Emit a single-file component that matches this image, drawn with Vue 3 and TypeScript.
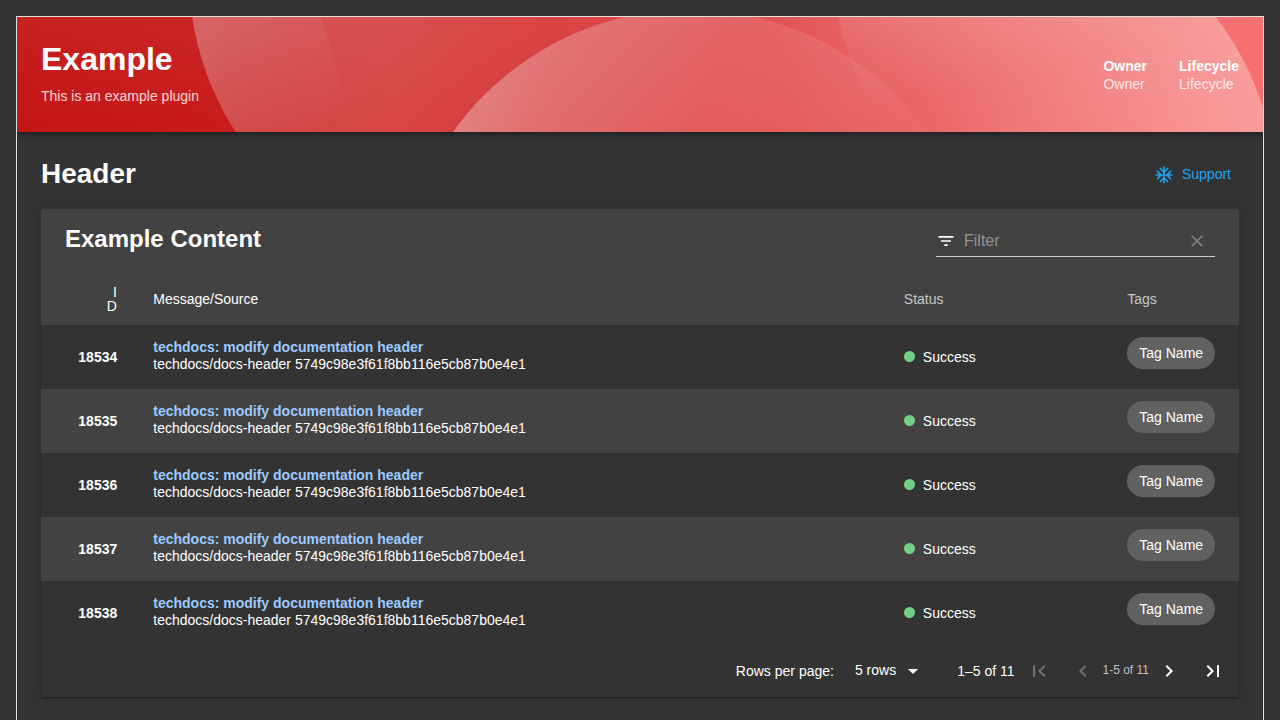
<script setup lang="ts">
interface Build {
  id: number
  message: string
  source: string
  status: string
  tag: string
}

const builds: Build[] = [18534, 18535, 18536, 18537, 18538].map((id) => ({
  id,
  message: 'techdocs: modify documentation header',
  source: 'techdocs/docs-header 5749c98e3f61f8bb116e5cb87b0e4e1',
  status: 'Success',
  tag: 'Tag Name',
}))

const labels = [
  { label: 'Owner', value: 'Owner' },
  { label: 'Lifecycle', value: 'Lifecycle' },
]
</script>

<template>
  <div class="page">
    <header class="banner">
      <svg class="waves" viewBox="0 0 1246 115" width="1246" height="115" aria-hidden="true">
        <defs>
          <linearGradient id="base" x1="0" y1="0" x2="1" y2="0">
            <stop offset="0" stop-color="#c41515" />
            <stop offset="0.17" stop-color="#c91b1b" />
            <stop offset="0.3" stop-color="#d43232" />
            <stop offset="0.45" stop-color="#da3c3c" />
            <stop offset="0.66" stop-color="#e45050" />
            <stop offset="1" stop-color="#f86c6c" />
          </linearGradient>
          <linearGradient id="sheen" x1="0" y1="0" x2="0" y2="1">
            <stop offset="0" stop-color="#e0d0d0" stop-opacity="0.06" />
            <stop offset="1" stop-color="#e0d0d0" stop-opacity="0" />
          </linearGradient>
          <linearGradient id="left" gradientUnits="userSpaceOnUse" x1="175" y1="0" x2="530" y2="45">
            <stop offset="0" stop-color="#eee" stop-opacity="0.25" />
            <stop offset="1" stop-color="#eee" stop-opacity="0" />
          </linearGradient>
          <linearGradient id="edge" gradientUnits="userSpaceOnUse" x1="230" y1="0" x2="290" y2="115">
            <stop offset="0" stop-color="#fff" stop-opacity="0.08" />
            <stop offset="1" stop-color="#fff" stop-opacity="0" />
          </linearGradient>
          <linearGradient id="middle" gradientUnits="userSpaceOnUse" x1="436" y1="90" x2="880" y2="190">
            <stop offset="0" stop-color="#f4f4f4" stop-opacity="0.36" />
            <stop offset="0.55" stop-color="#fff" stop-opacity="0.12" />
            <stop offset="0.8" stop-color="#fff" stop-opacity="0.09" />
            <stop offset="1" stop-color="#fff" stop-opacity="0.03" />
          </linearGradient>
          <linearGradient id="right" gradientUnits="userSpaceOnUse" x1="780" y1="120" x2="1220" y2="30">
            <stop offset="0" stop-color="#fff" stop-opacity="0" />
            <stop offset="0.5" stop-color="#fff" stop-opacity="0.17" />
            <stop offset="1" stop-color="#fff" stop-opacity="0.32" />
          </linearGradient>
          <linearGradient id="top" gradientUnits="userSpaceOnUse" x1="830" y1="5" x2="855" y2="98">
            <stop offset="0" stop-color="#fff" stop-opacity="0.09" />
            <stop offset="1" stop-color="#fff" stop-opacity="0" />
          </linearGradient>
          <clipPath id="leftClip"><circle cx="463" cy="-43" r="291" /></clipPath>
          <clipPath id="rightClip"><circle cx="968.5" cy="178" r="291" /></clipPath>
        </defs>
        <rect width="1246" height="115" fill="url(#base)" />
        <rect width="1246" height="115" fill="url(#sheen)" />
        <circle cx="463" cy="-43" r="291" fill="url(#left)" />
        <circle cx="35" cy="113" r="291" fill="url(#edge)" clip-path="url(#leftClip)" />
        <circle cx="673" cy="283.4" r="290.7" fill="url(#middle)" />
        <circle cx="968.5" cy="178" r="291" fill="url(#right)" />
        <circle cx="1106" cy="-59" r="291" fill="url(#top)" clip-path="url(#rightClip)" />
      </svg>
      <div class="heading">
        <h1>Example</h1>
        <p>This is an example plugin</p>
      </div>
      <dl class="labels">
        <div v-for="item in labels" :key="item.label">
          <dt>{{ item.label }}</dt>
          <dd>{{ item.value }}</dd>
        </div>
      </dl>
    </header>

    <main class="content">
      <div class="content-header">
        <h2>Header</h2>
        <button class="support">
          <svg viewBox="0 0 24 24" width="20" height="20"><path d="M22 11h-4.17l3.24-3.24-1.41-1.42L15 11h-2V9l4.66-4.66-1.42-1.41L13 6.17V2h-2v4.17L7.76 2.93 6.34 4.34 11 9v2H9L4.34 6.34 2.93 7.76 6.17 11H2v2h4.17l-3.24 3.24 1.41 1.42L9 13h2v2l-4.66 4.66 1.42 1.41L11 17.83V22h2v-4.17l3.24 3.24 1.42-1.41L13 15v-2h2l4.66 4.66 1.41-1.42L17.83 13H22z" /></svg>
          <span>Support</span>
        </button>
      </div>

      <section class="card">
        <div class="toolbar">
          <h3>Example Content</h3>
          <div class="filter">
            <svg viewBox="0 0 24 24" width="20" height="20"><path d="M10 18h4v-2h-4v2zM3 6v2h18V6H3zm3 7h12v-2H6v2z" /></svg>
            <span class="placeholder">Filter</span>
            <svg class="clear" viewBox="0 0 24 24" width="20" height="20"><path d="M19 6.41L17.59 5 12 10.59 6.41 5 5 6.41 10.59 12 5 17.59 6.41 19 12 13.41 17.59 19 19 17.59 13.41 12z" /></svg>
          </div>
        </div>

        <div class="row head">
          <div class="id"><span>I<br />D</span></div>
          <div>Message/Source</div>
          <div class="muted">Status</div>
          <div class="muted">Tags</div>
        </div>
        <div v-for="build in builds" :key="build.id" class="row item">
          <div class="id">{{ build.id }}</div>
          <div class="message">
            <a>{{ build.message }}</a>
            <p>{{ build.source }}</p>
          </div>
          <div class="status"><i></i>{{ build.status }}</div>
          <div class="tags"><span class="chip">{{ build.tag }}</span></div>
        </div>

        <footer class="pager">
          <span class="per-page">Rows per page:</span>
          <span class="select">5 rows</span>
          <svg class="caret" viewBox="0 0 24 24" width="24" height="24"><path d="M7 10l5 5 5-5z" /></svg>
          <span class="range">1–5 of 11</span>
          <svg class="first off" viewBox="0 0 24 24" width="24" height="24"><path d="M18.41 16.59L13.82 12l4.59-4.59L17 6l-6 6 6 6zM6 6h2v12H6z" /></svg>
          <svg class="prev off" viewBox="0 0 24 24" width="24" height="24"><path d="M15.41 7.41L14 6l-6 6 6 6 1.41-1.41L10.83 12z" /></svg>
          <span class="small">1-5 of 11</span>
          <svg class="next" viewBox="0 0 24 24" width="24" height="24"><path d="M10 6L8.59 7.41 13.17 12l-4.58 4.59L10 18l6-6z" /></svg>
          <svg class="last" viewBox="0 0 24 24" width="24" height="24"><path d="M5.59 7.41L10.18 12l-4.59 4.59L7 18l6-6-6-6zM16 6h2v12h-2z" /></svg>
        </footer>
      </section>
    </main>
  </div>
</template>

<style>
html,
body {
  margin: 0;
  background: #333;
  overflow: hidden;
}
</style>

<style scoped>
.page {
  box-sizing: border-box;
  width: 1248px;
  height: 704px;
  margin: 16px 0 0 16px;
  border: 1px solid #e0e0e0;
  border-bottom: 0;
  overflow: hidden;
  background: #333;
  color: #fff;
  font-family: 'Liberation Sans', Arial, sans-serif;
  font-size: 14px;
}
h1, h2, h3, p, dl, dd { margin: 0; }
svg { display: block; flex: none; fill: currentColor; }
.banner {
  position: relative;
  box-sizing: border-box;
  display: flex;
  justify-content: space-between;
  align-items: center;
  height: 115px;
  padding: 0 24px;
  box-shadow: 0 2px 4px -1px rgba(0, 0, 0, .2), 0 4px 5px rgba(0, 0, 0, .14), 0 1px 10px rgba(0, 0, 0, .12);
}
.waves { position: absolute; inset: 0; }
.heading, .labels { position: relative; }
h1 { font-size: 32px; line-height: 38px; }
.heading p { margin-top: 8px; line-height: 20px; opacity: .8; }
.heading { padding-bottom: 4px; }
.labels { display: flex; gap: 32px; padding-top: 1px; line-height: 18px; }
dt { font-weight: 700; }
dd { opacity: .8; }
.content { padding: 24px; }
.content-header { display: flex; justify-content: space-between; align-items: center; height: 37px; margin-bottom: 16px; }
h2 { padding-bottom: 2px; font-size: 28px; line-height: 34px; }
.support {
  display: flex;
  align-items: center;
  gap: 8px;
  padding: 0 8px;
  border: 0;
  background: none;
  color: #1fa4f4;
  font: 14px 'Liberation Sans', Arial, sans-serif;
}
.support span { padding-bottom: 2px; }
.card {
  border-radius: 4px;
  overflow: hidden;
  background: #424242;
  box-shadow: 0 3px 1px -2px rgba(0, 0, 0, .2), 0 2px 2px rgba(0, 0, 0, .14), 0 1px 5px rgba(0, 0, 0, .12);
}
.toolbar { display: flex; justify-content: space-between; height: 64px; padding: 0 24px; }
h3 { padding-top: 16px; font-size: 24px; line-height: 28px; }
.filter {
  box-sizing: border-box;
  display: flex;
  align-items: center;
  width: 279px;
  height: 32px;
  margin-top: 16px;
  border-bottom: 1px solid #cfcfcf;
}
.placeholder { flex: 1; padding-left: 8px; color: #929292; font-size: 16px; }
.clear { margin-right: 8px; color: #808080; }
.row { display: grid; grid-template-columns: 76.25px 786.6px 223.35px 111.8px; align-items: center; }
.row > :first-child { text-align: right; }
.row > :nth-child(2) { padding-left: 36px; }
.head { height: 52px; }
.head .id { padding-right: .4px; line-height: 14px; }
.muted { color: #c6c6c6; }
.item { height: 64px; background: #333; }
.item:nth-child(even) { background: #424242; }
.item .id { font-weight: 700; }
.message { padding-bottom: 3px; line-height: 17px; }
.message a { display: block; color: #9cc9ff; font-weight: 700; }
.status { display: flex; align-items: center; }
.status i { width: 11px; height: 11px; margin: 0 8px 1px 0; border-radius: 50%; background: #71cf88; }
.tags { padding-bottom: 8px; }
.chip { display: block; width: 88px; border-radius: 16px; background: #616161; line-height: 32px; text-align: center; }
.pager { display: flex; align-items: center; justify-content: flex-end; height: 52px; padding-right: 14px; background: #333; }
.select { margin-left: 21px; padding-bottom: 2px; }
.caret { margin-left: 5px; }
.range { margin-left: 32px; }
.first { margin-left: 12px; }
.prev { margin-left: 20px; }
.small { margin: 0 8px; padding-bottom: 2px; color: #c0c0c0; font-size: 12px; }
.last { margin-left: 20px; }
.off { color: #707070; }
</style>
